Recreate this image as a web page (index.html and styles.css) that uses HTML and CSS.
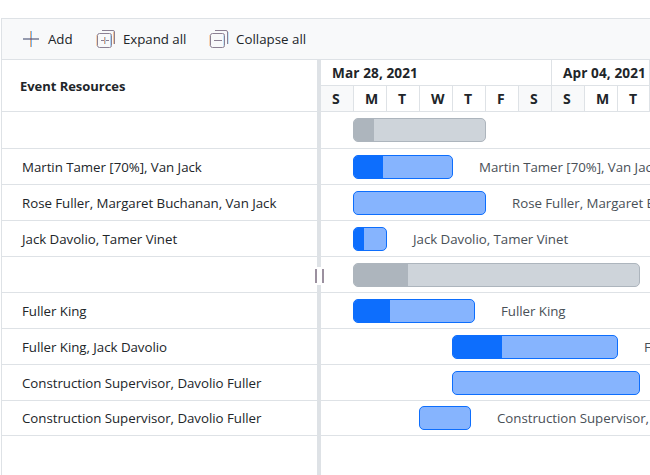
FILE: index.html
```
<!DOCTYPE html>
<html lang="en">
<head>
<meta charset="utf-8">
<title>Event Resources</title>
<link rel="stylesheet" href="styles.css">
</head>
<body>
<div class="gantt">
  <div class="toolbar">
    <button class="tool add"><svg width="18" height="18" viewBox="0 0 18 18"><path d="M1 9h16" stroke="#969bae" stroke-width="2"/><path d="M8.5 1v16" stroke="#edaa76"/><path d="M9.5 1v16" stroke="#75b8f5"/><path d="M8 9h2" stroke="#82748c" stroke-width="2"/></svg><span>Add</span></button>
    <button class="tool expand"><svg width="20" height="20" viewBox="0 0 20 20" fill="none" stroke="#8b8093"><path d="M6 1.5h11q1.5 0 1.5 1.5v12"/><path d="M17.5 3v12" stroke="#f3c49b"/><rect x="1.5" y="4.5" width="14" height="14" rx="2"/><path d="M.5 6v11" stroke="#f8d5b4"/><path d="M14.5 6v11" stroke="#a9d2f5"/><path d="M5 11.5h8"/><path d="M8.5 8v7" stroke="#dfa27c"/><path d="M9.5 8v7" stroke="#a9d2f5"/></svg><span>Expand all</span></button>
    <button class="tool collapse"><svg width="20" height="20" viewBox="0 0 20 20" fill="none" stroke="#8b8093"><path d="M6 1.5h11q1.5 0 1.5 1.5v12"/><path d="M19.5 3v12" stroke="#c5e4f7"/><rect x="1.5" y="4.5" width="14" height="14" rx="2"/><path d="M.5 6v11" stroke="#f8d5b4"/><path d="M14.5 6v11" stroke="#c5e4f7"/><path d="M5 11.5h8"/></svg><span>Collapse all</span></button>
  </div>
  <div class="panes">
    <div class="grid">
      <div class="grid-head">Event Resources</div>
      <div class="row first"></div>
      <div class="row"><span>Martin Tamer [70%], Van Jack</span></div>
      <div class="row"><span>Rose Fuller, Margaret Buchanan, Van Jack</span></div>
      <div class="row"><span>Jack Davolio, Tamer Vinet</span></div>
      <div class="row"></div>
      <div class="row"><span>Fuller King</span></div>
      <div class="row"><span>Fuller King, Jack Davolio</span></div>
      <div class="row"><span>Construction Supervisor, Davolio Fuller</span></div>
      <div class="row last"><span>Construction Supervisor, Davolio Fuller</span></div>
    </div>
    <div class="splitter"><div class="handle"><i></i><i></i></div></div>
    <div class="chart">
      <div class="weeks"><div class="week">Mar 28, 2021</div><div class="week next">Apr 04, 2021</div></div>
      <div class="days"><div class="day off">S</div><div class="day">M</div><div class="day">T</div><div class="day">W</div><div class="day">T</div><div class="day">F</div><div class="day off">S</div><div class="day off">S</div><div class="day">M</div><div class="day">T</div></div>
      <div class="row first"><div class="bar parent" style="margin-left:32px;width:133px"><b style="width:20px"></b></div></div>
      <div class="row"><div class="bar" style="margin-left:32px;width:100px"><b style="width:29px"></b></div><span>Martin Tamer [70%], Van Jack</span></div>
      <div class="row"><div class="bar" style="margin-left:32px;width:133px"></div><span>Rose Fuller, Margaret Buchanan, Van Jack</span></div>
      <div class="row"><div class="bar" style="margin-left:32px;width:34px"><b style="width:10px"></b></div><span>Jack Davolio, Tamer Vinet</span></div>
      <div class="row"><div class="bar parent" style="margin-left:32px;width:287px"><b style="width:54px"></b></div></div>
      <div class="row"><div class="bar" style="margin-left:32px;width:122px"><b style="width:36px"></b></div><span>Fuller King</span></div>
      <div class="row"><div class="bar" style="margin-left:131px;width:166px"><b style="width:49px"></b></div><span>Fuller King, Jack Davolio</span></div>
      <div class="row"><div class="bar" style="margin-left:131px;width:188px"></div></div>
      <div class="row last"><div class="bar" style="margin-left:98px;width:52px"></div><span>Construction Supervisor, Davolio Fuller</span></div>
    </div>
  </div>
</div>
</body>
</html>
```
FILE: styles.css
```
* { box-sizing: border-box; }
body {
  margin: 0;
  height: 475px;
  overflow: hidden;
  background: #fff;
  color: #212529;
  font: 13.3px/20px "Open Sans", "Noto Sans", sans-serif;
  letter-spacing: -0.04px;
}
.gantt {
  margin: 18px 0 0 1px;
  height: 457px;
  border-top: 1px solid #dee2e6;
  border-left: 1px solid #dee2e6;
  overflow: hidden;
}
.toolbar {
  display: flex;
  height: 41px;
  padding-left: 20px;
  background: #f8f9fa;
  border-bottom: 1px solid #dee2e6;
}
.tool {
  display: flex;
  align-items: center;
  flex: none;
  padding: 0;
  border: 0;
  background: none;
  color: inherit;
  font: inherit;
  letter-spacing: inherit;
}
.tool svg { flex: none; }
.add { width: 74px; gap: 8px; }
.expand { width: 113px; gap: 7px; }
.collapse { gap: 7px; letter-spacing: 0.02px; }
.panes { display: flex; height: 416px; }
.grid { width: 315px; flex: none; }
.grid-head {
  height: 52px;
  padding: 16px 0 0 18px;
  border-bottom: 1px solid #dee2e6;
  font-size: 13px;
  font-weight: 700;
}
.row {
  display: flex;
  align-items: center;
  height: 36px;
  border-bottom: 1px solid #dee2e6;
  white-space: nowrap;
}
.row.first { height: 37px; }
.row.last { height: 35px; }
.grid .row { padding-left: 20px; }
.splitter {
  position: relative;
  width: 4px;
  flex: none;
  background: #dee2e6;
}
.handle {
  position: absolute;
  z-index: 1;
  top: 207px;
  left: -2px;
  display: flex;
  justify-content: space-between;
  width: 9px;
  height: 18px;
  padding: 2px 0;
  background: #fff;
}
.handle i { width: 2px; background: #9b909f; }
.chart { flex: 1; min-width: 0; overflow: hidden; }
.weeks { display: flex; height: 26px; border-bottom: 1px solid #dee2e6; }
.week {
  width: 231px;
  flex: none;
  padding: 3px 0 0 11px;
  border-right: 1px solid #dee2e6;
  font-size: 13.6px;
  font-weight: 700;
  letter-spacing: 0.1px;
  white-space: nowrap;
}
.week.next { width: 98px; }
.days { display: flex; height: 26px; border-bottom: 1px solid #dee2e6; }
.day {
  width: 33px;
  flex: none;
  padding: 3px 0 0 11px;
  border-right: 1px solid #dee2e6;
  font-size: 14px;
  font-weight: 700;
}
.day.off { background: #f8f9fa; }
.day:last-child { width: 32px; }
.bar {
  flex: none;
  height: 24px;
  overflow: hidden;
  border: 1px solid #0d6efd;
  border-radius: 5px;
  background: #86b4fe;
}
.bar b { display: block; height: 100%; background: #0d6efd; }
.bar.parent { border-color: #adb5bd; background: #ced4da; }
.bar.parent b { background: #adb5bd; }
.chart span { margin-left: 26px; color: #495057; }
```
